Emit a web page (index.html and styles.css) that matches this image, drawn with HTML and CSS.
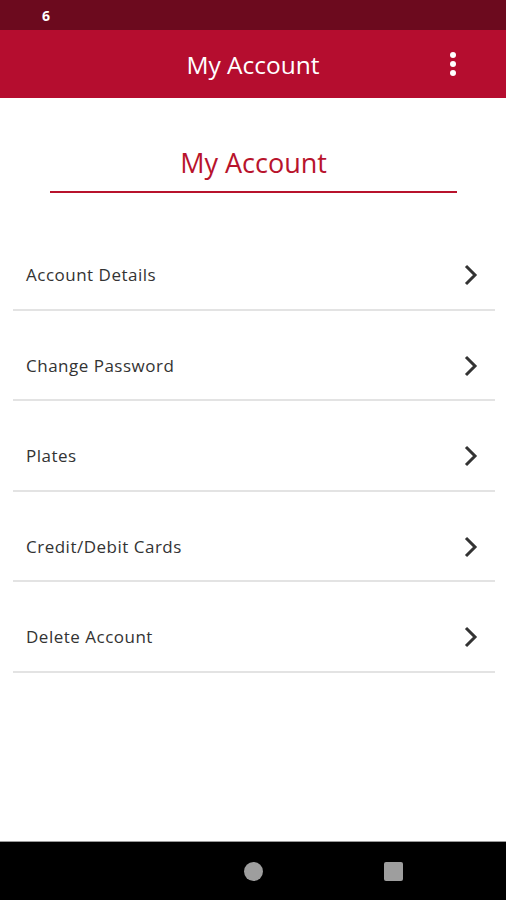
FILE: index.html
```html
<!DOCTYPE html>
<html lang="en">
<head>
  <meta charset="UTF-8">
  <title>My Account</title>
  <link rel="stylesheet" href="styles.css">
</head>
<body>
  <div class="status-bar">
    <span class="status-time">6</span>
  </div>

  <header class="app-bar">
    <h1 class="app-title">My Account</h1>
    <button class="menu-btn" aria-label="More options">
      <span class="dot"></span>
      <span class="dot"></span>
      <span class="dot"></span>
    </button>
  </header>

  <main class="content">
    <h2 class="page-heading">My Account</h2>

    <ul class="menu-list">
      <li class="menu-row">
        <span class="menu-label">Account Details</span>
        <svg class="chevron" viewBox="0 0 16 24" width="16" height="24"><path d="M3 3 L12 12 L3 21" /></svg>
      </li>
      <li class="menu-row">
        <span class="menu-label">Change Password</span>
        <svg class="chevron" viewBox="0 0 16 24" width="16" height="24"><path d="M3 3 L12 12 L3 21" /></svg>
      </li>
      <li class="menu-row">
        <span class="menu-label">Plates</span>
        <svg class="chevron" viewBox="0 0 16 24" width="16" height="24"><path d="M3 3 L12 12 L3 21" /></svg>
      </li>
      <li class="menu-row">
        <span class="menu-label">Credit/Debit Cards</span>
        <svg class="chevron" viewBox="0 0 16 24" width="16" height="24"><path d="M3 3 L12 12 L3 21" /></svg>
      </li>
      <li class="menu-row">
        <span class="menu-label">Delete Account</span>
        <svg class="chevron" viewBox="0 0 16 24" width="16" height="24"><path d="M3 3 L12 12 L3 21" /></svg>
      </li>
    </ul>
  </main>

  <nav class="nav-bar">
    <span class="nav-slot"></span>
    <span class="nav-slot"><span class="nav-home"></span></span>
    <span class="nav-slot"><span class="nav-recent"></span></span>
  </nav>
</body>
</html>
```

FILE: styles.css
```css
html, body {
  height: 100%;
}

body {
  margin: 0;
  font-family: "Open Sans", Arial, sans-serif;
  background-color: #fff;
  display: flex;
  flex-direction: column;
}

.status-bar {
  height: 30px;
  background-color: #6c0a1e;
  display: flex;
  align-items: center;
  padding-left: 42px;
}

.status-time {
  color: #fff;
  font-weight: bold;
  font-size: 14px;
}

.app-bar {
  height: 68px;
  background-color: #b50d2f;
  display: flex;
  align-items: center;
  justify-content: center;
  position: relative;
}

.app-title {
  margin: 0;
  color: #fff;
  font-size: 24.5px;
  font-weight: normal;
}

.menu-btn {
  position: absolute;
  right: 40px;
  top: 21px;
  width: 26px;
  height: 26px;
  padding: 0;
  border: none;
  background: none;
  display: flex;
  flex-direction: column;
  align-items: center;
  justify-content: center;
  gap: 3px;
}

.dot {
  width: 6px;
  height: 6px;
  border-radius: 50%;
  background-color: #fff;
}

.content {
  flex: 1;
}

.page-heading {
  margin: 48px 49px 0 50px;
  padding-bottom: 11px;
  border-bottom: 2px solid #b8132c;
  text-align: center;
  color: #b8132c;
  font-size: 27px;
  font-weight: normal;
  line-height: 34px;
}

.menu-list {
  list-style: none;
  margin: 27px 11px 0 13px;
  padding: 0;
}

.menu-row {
  height: 90.5px;
  box-sizing: border-box;
  padding: 44px 16px 22px 13px;
  border-bottom: 2px solid #e3e3e3;
  display: flex;
  justify-content: space-between;
  align-items: center;
}

.menu-label {
  font-size: 17px;
  letter-spacing: 0.5px;
  color: #333;
  line-height: 22px;
}

.chevron path {
  fill: none;
  stroke: #333;
  stroke-width: 3;
}

.nav-bar {
  height: 58px;
  background-color: #000;
  border-top: 1px solid #9a9a9a;
  display: grid;
  grid-template-columns: repeat(3, 140px);
  justify-content: center;
  align-items: center;
}

.nav-slot {
  display: flex;
  justify-content: center;
}

.nav-home {
  width: 19px;
  height: 19px;
  border-radius: 50%;
  background-color: #9e9e9e;
}

.nav-recent {
  width: 19px;
  height: 19px;
  border-radius: 2px;
  background-color: #9e9e9e;
}
```
